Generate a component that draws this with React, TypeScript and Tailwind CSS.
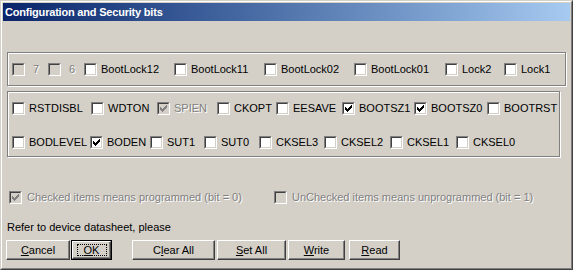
import React from "react";

type Item = { l: string; w: string; c?: boolean; d?: boolean; g?: string };

const Check = ({ color }: { color: string }) => (
  <svg width="7" height="7" viewBox="0 0 7 7" shapeRendering="crispEdges" className="block">
    <path
      d="M0 2h1v3H0z M1 3h1v3H1z M2 4h1v3H2z M3 3h1v3H3z M4 2h1v3H4z M5 1h1v3H5z M6 0h1v3H6z"
      fill={color}
    />
  </svg>
);

const Box = ({ checked, disabled }: { checked?: boolean; disabled?: boolean }) => (
  <div className="w-[13px] h-[13px] shrink-0 border border-t-[#808080] border-l-[#808080] border-r-white border-b-white">
    <div
      className={
        "w-full h-full border border-t-[#404040] border-l-[#404040] border-r-[#d4d0c8] border-b-[#d4d0c8] flex items-center justify-center " +
        (disabled ? "bg-[#d4d0c8]" : "bg-white")
      }
    >
      {checked && <Check color={disabled ? "#808080" : "#000000"} />}
    </div>
  </div>
);

const disabledText = "text-[#808080] [text-shadow:1px_1px_0_#ffffff]";

const CheckItem = ({ it }: { it: Item }) => (
  <div className={"flex items-center shrink-0 " + it.w + " " + (it.g ?? "gap-[4px]")}>
    <Box checked={it.c} disabled={it.d} />
    <span className={"leading-[13px] whitespace-nowrap " + (it.d ? disabledText : "text-black")}>{it.l}</span>
  </div>
);

const row1: Item[] = [
  { l: "7", w: "w-[36px]", d: true, g: "gap-[8px]" },
  { l: "6", w: "w-[36px]", d: true, g: "gap-[8px]" },
  { l: "BootLock12", w: "w-[90px]" },
  { l: "BootLock11", w: "w-[90px]" },
  { l: "BootLock02", w: "w-[90px]" },
  { l: "BootLock01", w: "w-[91px]" },
  { l: "Lock2", w: "w-[59px]" },
  { l: "Lock1", w: "w-[50px]" },
];

const row2: Item[] = [
  { l: "RSTDISBL", w: "w-[79px]" },
  { l: "WDTON", w: "w-[66px]" },
  { l: "SPIEN", w: "w-[60px]", c: true, d: true },
  { l: "CKOPT", w: "w-[59px]" },
  { l: "EESAVE", w: "w-[66px]" },
  { l: "BOOTSZ1", w: "w-[72px]", c: true },
  { l: "BOOTSZ0", w: "w-[73px]", c: true },
  { l: "BOOTRST", w: "w-[66px]" },
];

const row3: Item[] = [
  { l: "BODLEVEL", w: "w-[78px]" },
  { l: "BODEN", w: "w-[60px]", c: true },
  { l: "SUT1", w: "w-[54px]" },
  { l: "SUT0", w: "w-[55px]" },
  { l: "CKSEL3", w: "w-[65px]" },
  { l: "CKSEL2", w: "w-[66px]" },
  { l: "CKSEL1", w: "w-[66px]" },
  { l: "CKSEL0", w: "w-[60px]" },
];

const Btn = ({
  children,
  w,
  def,
}: {
  children: React.ReactNode;
  w: string;
  def?: boolean;
}) =>
  def ? (
    <div className={"h-[20px] border border-black shrink-0 " + w}>
      <div className="w-full h-full border border-t-white border-l-white border-r-[#404040] border-b-[#404040] [box-shadow:inset_-1px_-1px_0_#808080] flex items-center justify-center">
        <div className="w-[30px] h-[12px] border border-dotted border-black flex items-center justify-center leading-[12px]">
          {children}
        </div>
      </div>
    </div>
  ) : (
    <div
      className={
        "h-[20px] shrink-0 border border-t-white border-l-white border-r-[#404040] border-b-[#404040] [box-shadow:inset_-1px_-1px_0_#808080] flex items-center justify-center leading-[13px] " +
        w
      }
    >
      {children}
    </div>
  );

export default function App() {
  return (
    <div className="w-[573px] h-[270px] bg-[#d4d0c8] font-['Liberation_Sans',Arial,sans-serif] text-[11px] text-black overflow-hidden">
      <div className="w-full h-full border border-t-[#d4d0c8] border-l-[#d4d0c8] border-r-[#404040] border-b-[#404040]">
        <div className="w-full h-full border border-t-white border-l-white border-r-[#808080] border-b-[#808080] p-[1px] flex flex-col">
          <div className="h-[18px] shrink-0 bg-linear-to-r from-[#0a246a] to-[#a6caf0] flex items-center pl-[2px]">
            <span className="text-white font-bold text-[11px] tracking-[-0.2px] leading-[13px] whitespace-nowrap">
              Configuration and Security bits
            </span>
          </div>
          <div className="flex flex-col pl-[4px]">
            <div className="mt-[31px] w-[559px] h-[34px] border border-[#808080] [box-shadow:inset_1px_1px_0_#ffffff,1px_1px_0_#ffffff] flex items-center pl-[4px] pt-[1px]">
              {row1.map((it) => (
                <CheckItem key={it.l} it={it} />
              ))}
            </div>
            <div className="mt-[5px] w-[553px] h-[66px] border border-[#808080] [box-shadow:inset_1px_1px_0_#ffffff,1px_1px_0_#ffffff] flex flex-col pl-[4px] pt-[10px] gap-[21px]">
              <div className="flex items-center h-[13px]">
                {row2.map((it) => (
                  <CheckItem key={it.l} it={it} />
                ))}
              </div>
              <div className="flex items-center h-[13px]">
                {row3.map((it) => (
                  <CheckItem key={it.l} it={it} />
                ))}
              </div>
            </div>
            <div className="mt-[34px] ml-[2px] flex items-center h-[13px]">
              <CheckItem
                it={{ l: "Checked items means programmed (bit = 0)", w: "w-[265px]", c: true, d: true, g: "gap-[5px]" }}
              />
              <CheckItem
                it={{ l: "UnChecked items means unprogrammed (bit = 1)", w: "w-[250px]", d: true, g: "gap-[5px]" }}
              />
            </div>
            <div className="mt-[17px] leading-[13px] whitespace-nowrap">Refer to device datasheet, please</div>
            <div className="mt-[6px] flex items-center -ml-[1px]">
              <Btn w="w-[64px]">
                <span>
                  <u>C</u>ancel
                </span>
              </Btn>
              <div className="ml-[1px]">
                <Btn w="w-[41px]" def>
                  <span>
                    <u>O</u>K
                  </span>
                </Btn>
              </div>
              <div className="ml-[20px]">
                <Btn w="w-[83px]">
                  <span>
                    C<u>l</u>ear All
                  </span>
                </Btn>
              </div>
              <div className="ml-[2px]">
                <Btn w="w-[69px]">
                  <span>
                    <u>S</u>et All
                  </span>
                </Btn>
              </div>
              <div className="ml-[2px]">
                <Btn w="w-[57px]">
                  <span>
                    <u>W</u>rite
                  </span>
                </Btn>
              </div>
              <div className="ml-[4px]">
                <Btn w="w-[51px]">
                  <span>
                    <u>R</u>ead
                  </span>
                </Btn>
              </div>
            </div>
          </div>
        </div>
      </div>
    </div>
  );
}
